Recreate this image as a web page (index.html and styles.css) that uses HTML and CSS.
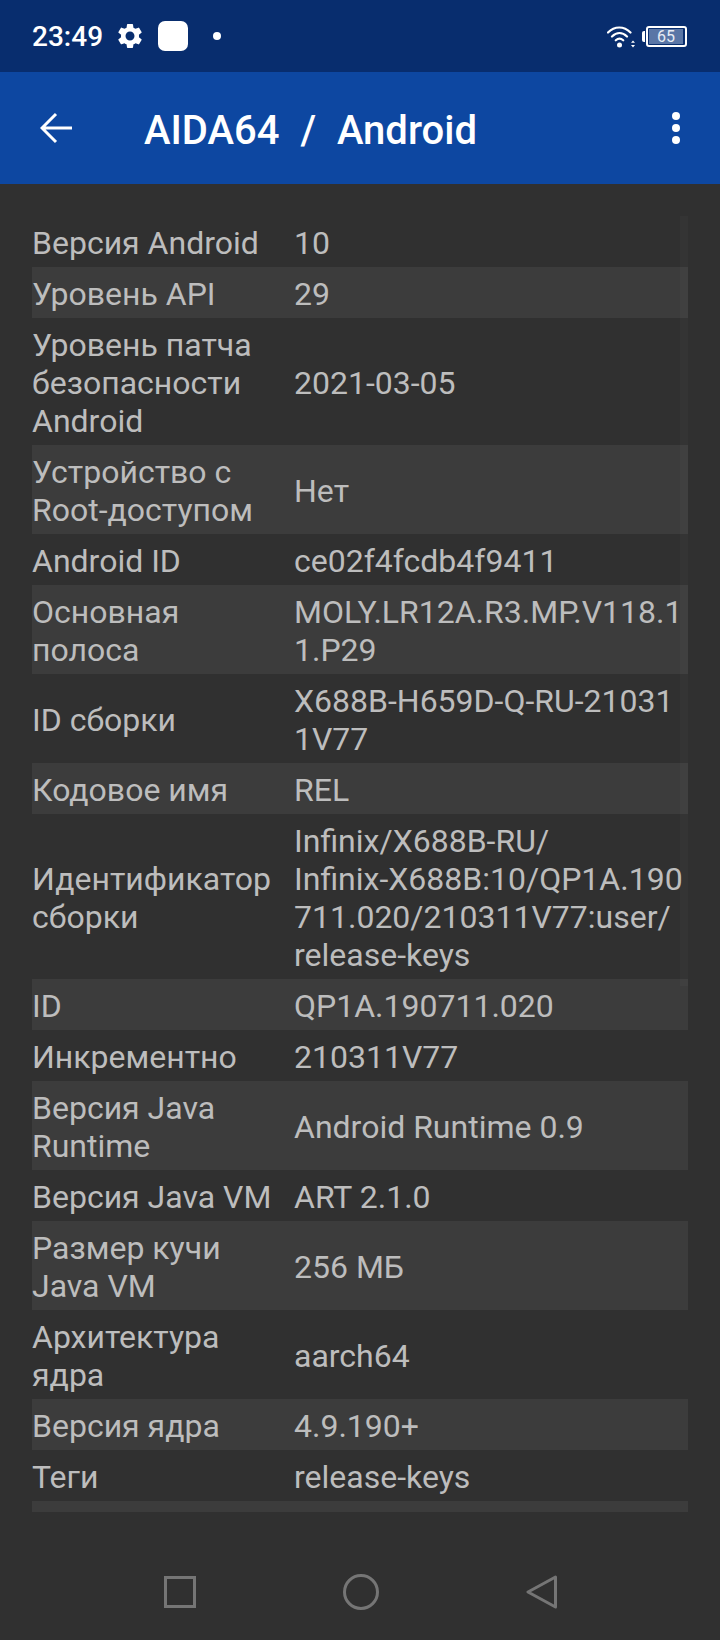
FILE: index.html
```html
<!DOCTYPE html>
<html lang="en">
<head>
  <meta charset="UTF-8">
  <title>AIDA64 / Android</title>
  <meta name="viewport" content="width=device-width, initial-scale=1">
  <link rel="stylesheet" href="styles.css">
</head>
<body>
<div class="status-bar">
  <span class="clock">23:49</span>
  <svg class="gear" viewBox="0 0 24 24"><path d="M19.14 12.94c.04-.3.06-.61.06-.94 0-.32-.02-.64-.07-.94l2.03-1.58a.49.49 0 0 0 .12-.61l-1.92-3.32a.488.488 0 0 0-.59-.22l-2.39.96c-.5-.38-1.03-.7-1.62-.94l-.36-2.54a.484.484 0 0 0-.48-.41h-3.84c-.24 0-.43.17-.47.41l-.36 2.54c-.59.24-1.13.57-1.62.94l-2.39-.96c-.22-.08-.47 0-.59.22L2.74 8.87c-.12.21-.08.47.12.61l2.03 1.58c-.05.3-.09.63-.09.94s.02.64.07.94l-2.03 1.58a.49.49 0 0 0-.12.61l1.92 3.32c.12.22.37.29.59.22l2.39-.96c.5.38 1.03.7 1.62.94l.36 2.54c.05.24.24.41.48.41h3.84c.24 0 .44-.17.47-.41l.36-2.54c.59-.24 1.13-.56 1.62-.94l2.39.96c.22.08.47 0 .59-.22l1.92-3.32c.12-.22.07-.47-.12-.61l-2.01-1.58zM12 15.6c-1.98 0-3.6-1.62-3.6-3.6s1.62-3.6 3.6-3.6 3.6 1.62 3.6 3.6-1.62 3.6-3.6 3.6z"/></svg>
  <span class="app-square"></span>
  <span class="dot"></span>
  <span class="spacer"></span>
  <svg class="wifi" viewBox="0 0 28 23">
    <path d="M1 7.5C7.5 .8 17 .8 23.5 7.5M5 11.5c4.700-4.500 10.300-4.500 15 0M8.800 15.300c2.500-2.300 4.900-2.300 7.400 0" fill="none" stroke="#fff" stroke-width="2.200" stroke-linecap="round"/>
    <circle cx="12.500" cy="20" r="2.500" fill="#fff"/>
    <path d="M26 15.500l2 2.200h-4zM26 22.500l-2-2.500h4z" fill="#fff"/>
  </svg>
  <div class="battery">
    <span class="battery-nub"></span>
    <div class="battery-body"><span class="battery-level">65</span></div>
  </div>
</div>

<div class="app-bar">
  <svg class="back" viewBox="0 0 32 32"><path d="M32 16H3M16 2L2 16l14 14" fill="none" stroke="#fff" stroke-width="3"/></svg>
  <h1 class="title">AIDA64  /  Android</h1>
  <div class="more"><span></span><span></span><span></span></div>
</div>

<div class="content">
  <div class="row"><div>Версия Android</div><div>10</div></div>
  <div class="row"><div>Уровень API</div><div>29</div></div>
  <div class="row"><div>Уровень патча<br>безопасности<br>Android</div><div>2021-03-05</div></div>
  <div class="row"><div>Устройство с<br>Root-доступом</div><div>Нет</div></div>
  <div class="row"><div>Android ID</div><div>ce02f4fcdb4f9411</div></div>
  <div class="row"><div>Основная<br>полоса</div><div>MOLY.LR12A.R3.MP.V118.1<br>1.P29</div></div>
  <div class="row"><div>ID сборки</div><div>X688B-H659D-Q-RU-21031<br>1V77</div></div>
  <div class="row"><div>Кодовое имя</div><div>REL</div></div>
  <div class="row"><div>Идентификатор<br>сборки</div><div>Infinix/X688B-RU/<br>Infinix-X688B:10/QP1A.190<br>711.020/210311V77:user/<br>release-keys</div></div>
  <div class="row"><div>ID</div><div>QP1A.190711.020</div></div>
  <div class="row"><div>Инкрементно</div><div>210311V77</div></div>
  <div class="row"><div>Версия Java<br>Runtime</div><div>Android Runtime 0.9</div></div>
  <div class="row"><div>Версия Java VM</div><div>ART 2.1.0</div></div>
  <div class="row"><div>Размер кучи<br>Java VM</div><div>256 МБ</div></div>
  <div class="row"><div>Архитектура<br>ядра</div><div>aarch64</div></div>
  <div class="row"><div>Версия ядра</div><div>4.9.190+</div></div>
  <div class="row"><div>Теги</div><div>release-keys</div></div>
  <div class="row"></div>
  <div class="scroll-thumb"></div>
</div>

<div class="nav-bar">
  <svg class="nav-square" viewBox="0 0 32 32"><rect x="1.500" y="1.500" width="29" height="29" fill="none" stroke="#757575" stroke-width="3"/></svg>
  <svg class="nav-circle" viewBox="0 0 36 36"><circle cx="18" cy="18" r="16.500" fill="none" stroke="#757575" stroke-width="3"/></svg>
  <svg class="nav-back" viewBox="0 0 31 34"><path d="M29.500 2L2 17l27.500 15z" fill="none" stroke="#757575" stroke-width="3" stroke-linejoin="round"/></svg>
</div>
</body>
</html>
```

FILE: styles.css
```css
* { box-sizing: border-box; }
body {
  margin: 0;
  width: 720px;
  height: 1640px;
  background: #303030;
  color: #bdbdbd;
  font-family: Roboto, sans-serif;
  display: flex;
  flex-direction: column;
  overflow: hidden;
}
.status-bar {
  height: 72px;
  flex: none;
  background: #082d6e;
  color: #fff;
  display: flex;
  align-items: center;
  padding: 0 33px 0 32px;
}
.clock {
  font-size: 28px;
  font-weight: 500;
  width: 83px;
}
.gear {
  width: 30px;
  height: 30px;
  fill: #fff;
}
.app-square {
  width: 30px;
  height: 30px;
  margin-left: 13px;
  background: #fff;
  border-radius: 7px;
}
.dot {
  width: 8px;
  height: 8px;
  margin-left: 25px;
  background: #fff;
  border-radius: 50%;
}
.spacer { flex: 1; }
.wifi {
  width: 28px;
  height: 23px;
}
.battery {
  display: flex;
  align-items: center;
  margin-left: 7px;
}
.battery-nub {
  width: 3px;
  height: 11px;
  background: #fff;
  border-radius: 2px 0 0 2px;
  margin-right: 1px;
}
.battery-body {
  width: 41px;
  height: 21px;
  border: 2px solid #fff;
  border-radius: 3px;
  padding: 1px;
  display: flex;
}
.battery-level {
  width: 34px;
  padding-left: 8px;
  background: #5a76a6;
  color: #e8ecf4;
  font-size: 16px;
  line-height: 15px;
}
.app-bar {
  height: 112px;
  flex: none;
  background: #0d47a1;
  color: #fff;
  display: flex;
  align-items: center;
  padding: 0 40px;
}
.back {
  width: 32px;
  height: 32px;
}
.title {
  flex: 1;
  margin: 0 0 0 72px;
  padding-top: 4px;
  font-size: 40px;
  font-weight: 500;
  word-spacing: 0.5px;
  white-space: pre;
}
.more {
  display: flex;
  flex-direction: column;
  gap: 4px;
}
.more span {
  width: 8px;
  height: 8px;
  background: #fff;
  border-radius: 50%;
}
.content {
  position: relative;
  margin: 32px 32px 0;
  height: 1296px;
  overflow: hidden;
  flex: none;
}
.row {
  display: grid;
  grid-template-columns: 262px 1fr;
  align-items: center;
  padding: 7.5px 0 5.5px;
  font-size: 32px;
  line-height: 38px;
  white-space: nowrap;
}
.row:nth-child(even) { background: #3c3c3c; }
.row:nth-child(18) { height: 51px; }
.scroll-thumb {
  position: absolute;
  top: 0;
  right: 0;
  width: 8px;
  height: 770px;
  background: rgba(255, 255, 255, 0.025);
}
.nav-bar {
  flex: 1;
  display: flex;
  align-items: center;
  justify-content: center;
  gap: 147px;
  padding-top: 32px;
}
.nav-square { width: 32px; height: 32px; }
.nav-circle { width: 36px; height: 36px; }
.nav-back { width: 31px; height: 34px; }
```
